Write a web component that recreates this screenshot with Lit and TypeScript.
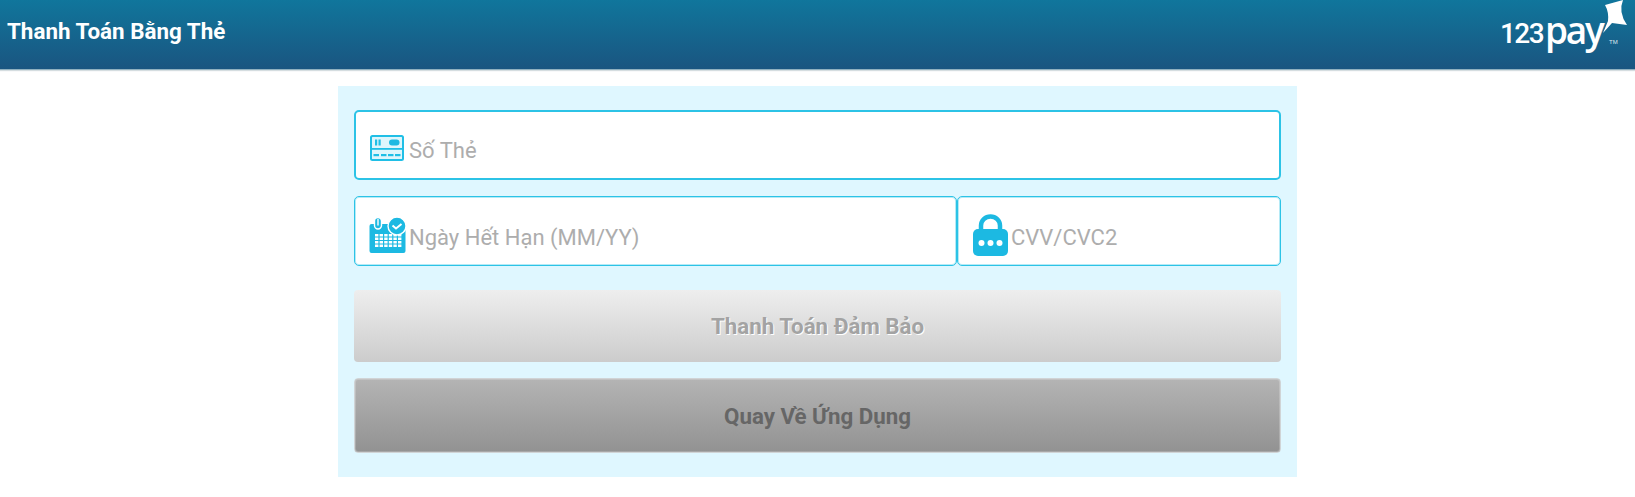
import { LitElement, html, css, svg } from "lit";
import { customElement } from "lit/decorators.js";

const cardIcon = svg`<svg class="ic" width="34" height="26" viewBox="0 0 34 26">
<rect x="1" y="1" width="32" height="24" rx="1.5" fill="#dff6fc" stroke="#20bfe6" stroke-width="2"/>
<rect x="5" y="4.5" width="2.2" height="6" fill="#20bfe6"/><rect x="8.5" y="4.5" width="2.2" height="6" fill="#20bfe6"/>
<rect x="19" y="4.5" width="10.5" height="6" rx="3" fill="#1cb9e2"/>
<rect x="2" y="13" width="30" height="1.8" fill="#20bfe6"/>
<rect x="3.5" y="19" width="5.5" height="2.2" fill="#20bfe6"/><rect x="11" y="19" width="5.5" height="2.2" fill="#20bfe6"/><rect x="18" y="19" width="5.5" height="2.2" fill="#20bfe6"/><rect x="25" y="19" width="5.5" height="2.2" fill="#20bfe6"/>
</svg>`;

const grid = [0, 1, 2, 3, 4, 5].flatMap((c) =>
  [0, 1, 2, 3].map((r) => svg`<rect x="${6 + c * 4.6}" y="${17 + r * 3.5}" width="3.4" height="2.5" fill="#fff"/>`)
);

const calIcon = svg`<svg class="ic" width="37" height="37" viewBox="0 0 37 37">
<path d="M0.5 9a2 2 0 0 1 2-2h32a2 2 0 0 1 2 2V34a2 2 0 0 1-2 2H2.5a2 2 0 0 1-2-2z" fill="#1cb9e2"/>
<path d="M5.5 7.5V4a3.5 3.5 0 0 1 7 0v4.5a3.5 3.5 0 0 1-7 0z" fill="#1cb9e2" stroke="#fff" stroke-width="1.4"/>
<path d="M9 2.5v5.5" fill="none" stroke="#fff" stroke-width="1.4" stroke-linecap="round"/>
${grid}
<circle cx="28" cy="9" r="9" fill="#1cb9e2" stroke="#fff" stroke-width="1.4"/>
<path d="M23.5 8.5l3.5 3 5.5-4.5" fill="none" stroke="#fff" stroke-width="2"/>
</svg>`;

const lockIcon = svg`<svg class="ic" width="35" height="42" viewBox="0 0 35 42">
<path d="M8 17V11.5a9.5 9 0 0 1 19 0V17" fill="none" stroke="#1cb9e2" stroke-width="4.5"/>
<rect x="0" y="15" width="35" height="27" rx="5" fill="#1cb9e2"/>
<circle cx="8.5" cy="29" r="3" fill="#fff"/><circle cx="17.5" cy="29" r="3" fill="#fff"/><circle cx="26.5" cy="29" r="3" fill="#fff"/>
</svg>`;

@customElement("app-root")
export class AppRoot extends LitElement {
  static styles = css`
    :host { display: block; font-family: Roboto, "Noto Sans", sans-serif; background: #fff; min-height: 497px; }
    header {
      height: 70px; box-sizing: border-box; border-bottom: 1px solid #8fb0bf;
      background: linear-gradient(#10769c, #1a5580);
      display: flex; align-items: center; justify-content: space-between;
      box-shadow: 0 1px 1px #d5dde0;
    }
    h1 { margin: 0 0 6px 7px; font-size: 22.4px; font-weight: 700; color: #fff; line-height: 1; }
    .logo { position: relative; width: 135px; height: 69px; display: block; flex: none; }
    .logo svg { position: absolute; left: 103px; top: 0; }
    .n { position: absolute; left: 0; top: 20px; font: 500 28px/1 Roboto, sans-serif; color: #fff; letter-spacing: -1.6px; }
    .p { position: absolute; left: 45px; top: 11px; font: 600 37px/1 "Open Sans", sans-serif; color: #fff; letter-spacing: -2.2px; }
    .t { position: absolute; left: 109px; top: 39px; font: 400 6px/1 "Liberation Sans", sans-serif; color: #dfe9ef; }
    .panel {
      width: 927px; margin: 16px auto 0; padding: 24px 16px 24px; background: #dff7ff;
      display: flex; flex-direction: column;
    }
    .row { display: flex; margin-bottom: 16px; }
    .field {
      box-sizing: border-box; height: 70px; flex: 1; display: flex; align-items: center;
      background: #fff; border: 2px solid #2cc3e6; border-radius: 5px;
      padding: 6px 0 0 14px; font-size: 22px; color: #adadad; gap: 5px;
    }
    .field span { margin-top: 5px; }
    .date, .cvv {
      padding-top: 8px; gap: 3px; padding-left: 15px;
      border: 1px solid #2cc3e6; box-shadow: inset 0 0 0 1px rgba(44, 195, 230, 0.35);
    }
    .date span, .cvv span { margin-top: 4px; }
    .date { flex: 0 0 603px; padding-left: 14px; }
    .ic { flex: none; }
    .btn {
      display: flex; align-items: center; justify-content: center; box-sizing: border-box;
      font-size: 22.3px; font-weight: 700; border-radius: 4px;
    }
    .pay {
      height: 72px; margin-top: 8px; color: #a3a3a3; text-shadow: 1px 1px 0 #fff;
      background: linear-gradient(#eeeeee, #cccccc);
    }
    .back {
      height: 75px; margin-top: 16px; color: #666;
      background: linear-gradient(#b4b4b4, #929292);
      border: 1px solid #d0d4d6; box-shadow: inset 0 0 0 1px rgba(255, 255, 255, 0.2);
    }
  `;

  render() {
    return html`
      <header>
        <h1>Thanh Toán Bằng Thẻ</h1>
        <span class="logo">
          <span class="n">123</span><span class="p">pay</span><span class="t">TM</span>
          <svg width="25" height="34" viewBox="0 0 25 34"><path d="M2 5L20 0Q15 12 24 25L9 23L0 33L5 21Q6 12 2 5Z" fill="#fff"/></svg>
        </span>
      </header>
      <div class="panel">
        <div class="row"><div class="field">${cardIcon}<span>Số Thẻ</span></div></div>
        <div class="row">
          <div class="field date">${calIcon}<span>Ngày Hết Hạn (MM/YY)</span></div>
          <div class="field cvv">${lockIcon}<span>CVV/CVC2</span></div>
        </div>
        <div class="btn pay">Thanh Toán Đảm Bảo</div>
        <div class="btn back">Quay Về Ứng Dụng</div>
      </div>
    `;
  }
}
